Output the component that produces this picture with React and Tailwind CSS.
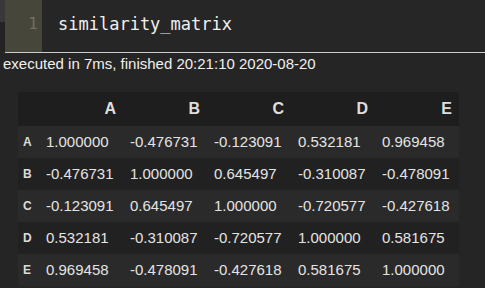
const cols = ["A", "B", "C", "D", "E"];

const rows = [
    ["A", ["1.000000", "-0.476731", "-0.123091", "0.532181", "0.969458"]],
    ["B", ["-0.476731", "1.000000", "0.645497", "-0.310087", "-0.478091"]],
    ["C", ["-0.123091", "0.645497", "1.000000", "-0.720577", "-0.427618"]],
    ["D", ["0.532181", "-0.310087", "-0.720577", "1.000000", "0.581675"]],
    ["E", ["0.969458", "-0.478091", "-0.427618", "0.581675", "1.000000"]],
];

export default function App() {
    return (
        <div className="w-[485px] h-[288px] overflow-hidden bg-[#252525] font-['Liberation_Sans',Arial,sans-serif]">
            {/* code cell */}
            <div className="flex h-[52px] bg-[#262626]">
                <div className="w-[5px] flex flex-col">
                    <div className="h-[22px] bg-[#383838]"/>
                    <div className="flex-1 bg-[#232323]"/>
                </div>
                <div className="w-[37px] bg-[#46463a] flex justify-end pr-[4px] pt-[14px] font-['DejaVu_Sans_Mono',monospace] text-[16px] leading-[20px] text-[#6f6f60]">
                    1
                </div>
                <div className="pl-[16px] pt-[14px] font-['DejaVu_Sans_Mono',monospace] text-[17px] leading-[20px] text-[#f0f0f0]">
                    similarity_matrix
                </div>
            </div>
            <div className="ml-[5px] h-px bg-[#cdcdcd]"/>

            <div className="pl-[3px] pt-[1px] h-[20px] text-[15px] leading-[20px] text-[#f0f0f0]">
                executed in 7ms, finished 20:21:10 2020-08-20
            </div>

            {/* output */}
            <div className="pt-[19px] pl-[18px]">
                <table className="border-collapse text-[15px] text-[#e4e4e4]">
                    <thead>
                    <tr className="h-[34px] bg-[#1e1e1e]">
                        <th className="w-[21px]"/>
                        {cols.map((c) => (
                            <th key={c} className="w-[84px] pr-[7px] text-right font-bold text-[16px] text-[#dedede]">
                                {c}
                            </th>
                        ))}
                    </tr>
                    </thead>
                    <tbody>
                    {rows.map(([name, vals], i) => (
                        <tr key={name} className={i % 2 === 0 ? "h-[32px] bg-[#2a2a2a]" : "h-[32px] bg-[#212121]"}>
                            <th className="w-[21px] pl-[5px] text-left text-[12px] font-bold text-[#dcdcdc]">{name}</th>
                            {vals.map((v, j) => (
                                <td key={j} className="w-[84px] pl-[7px] text-left whitespace-nowrap">
                                    {v}
                                </td>
                            ))}
                        </tr>
                    ))}
                    </tbody>
                </table>
            </div>
        </div>
    );
}
